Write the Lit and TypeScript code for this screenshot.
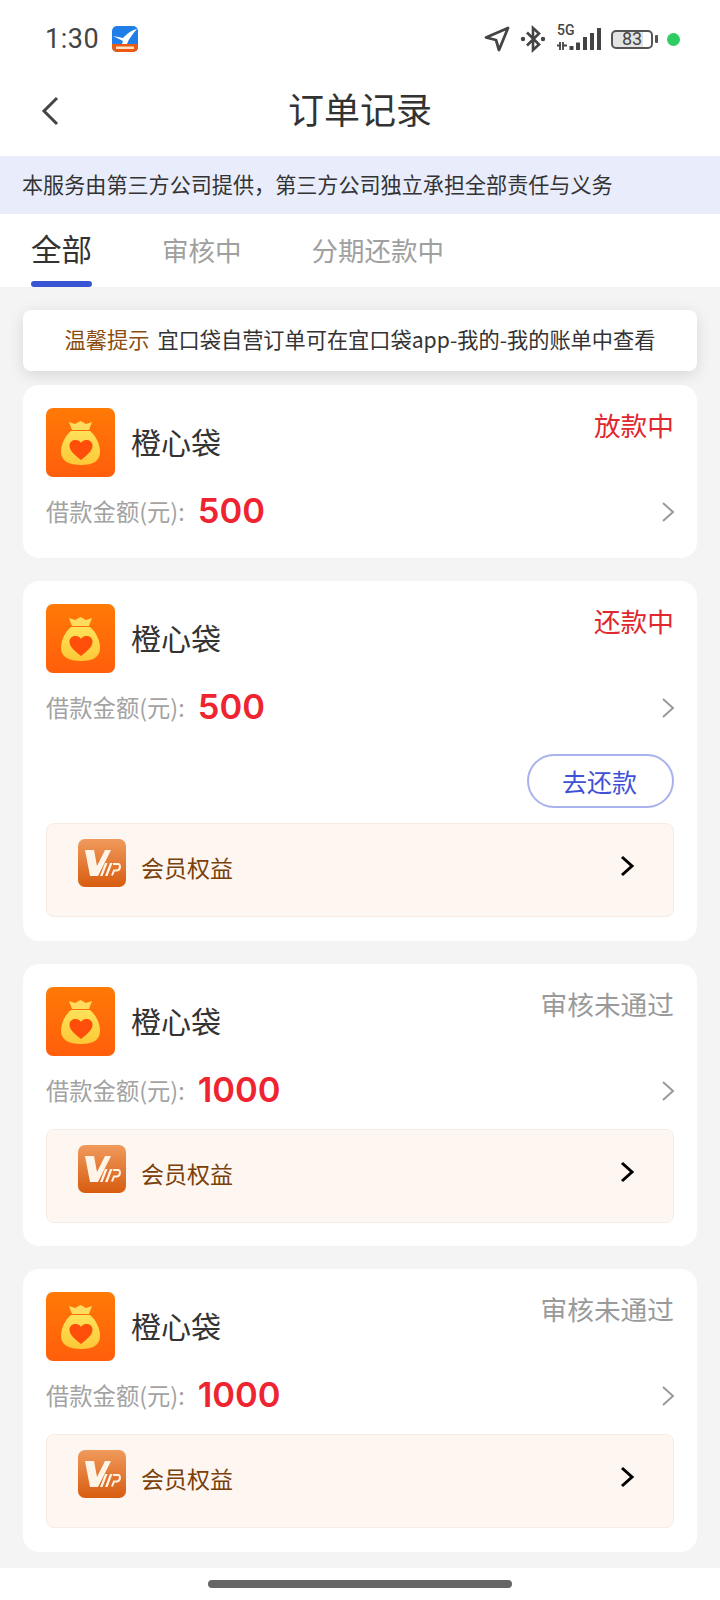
import { LitElement, html, css, nothing } from 'lit';
import { customElement } from 'lit/decorators.js';

interface Order {
  amount: string;
  status: string;
  statusColor: 'red' | 'grey';
  repay?: boolean;
  vip?: boolean;
}

const ORDERS: Order[] = [
  { amount: '500', status: '放款中', statusColor: 'red' },
  { amount: '500', status: '还款中', statusColor: 'red', repay: true, vip: true },
  { amount: '1000', status: '审核未通过', statusColor: 'grey', vip: true },
  { amount: '1000', status: '审核未通过', statusColor: 'grey', vip: true },
];

const bagIcon = html`<svg class="bag" viewBox="0 0 69 69" width="69" height="69">
  <defs>
    <linearGradient id="bagBg" x1="0" y1="0" x2="0" y2="1">
      <stop offset="0" stop-color="#ff7a06" />
      <stop offset="1" stop-color="#ff5e0c" />
    </linearGradient>
    <linearGradient id="bagBody" x1="0" y1="0" x2="0" y2="1">
      <stop offset="0" stop-color="#ffe25a" />
      <stop offset="1" stop-color="#fdc836" />
    </linearGradient>
  </defs>
  <rect width="69" height="69" rx="7" fill="url(#bagBg)" />
  <path d="M23 14 L29 16 L34.500 13 L40 16 L46 14 L43 22 H26 Z" fill="#ffdc5e" />
  <path d="M25 23 H44 C50 28 54 36 54 44 C54 53 47 57 35 57 C23 57 15 53 15 44 C15 36 19 28 25 23 Z" fill="url(#bagBody)" />
  <path d="M35 52 C29 47 23.500 43 23.500 37.500 C23.500 34 26.500 32 29.500 32 C32 32 34 33 35 35 C36 33 38 32 40.500 32 C43.500 32 46.500 34 46.500 37.500 C46.500 43 41 47 35 52 Z" fill="#ff4d0a" />
</svg>`;

const vipIcon = html`<svg class="vip" viewBox="0 0 48 48" width="48" height="48">
  <defs>
    <linearGradient id="vipBg" x1="0" y1="0" x2="0" y2="1">
      <stop offset="0" stop-color="#f09a5c" />
      <stop offset="1" stop-color="#d75c10" />
    </linearGradient>
  </defs>
  <rect width="48" height="48" rx="7" fill="url(#vipBg)" />
  <path d="M7 11 H16 L19 27 L27 11 H33 L20 37 H12 Z" fill="#fff4e8" />
  <path d="M27 24 H29.500 L24.500 37 H22 Z M32 24 H34.500 L29.500 37 H27 Z" fill="#fff4e8" />
  <path d="M35 25 H40 C43 25 42.500 31 39 31.500 H36 L34 36.500" fill="none" stroke="#fff4e8" stroke-width="2" />
</svg>`;

const chevron = (cls: string) => html`<svg class=${cls} viewBox="0 0 16 24" width="16" height="24">
  <path d="M3 3 L13 12 L3 21" fill="none" stroke="currentColor" />
</svg>`;

@customElement('status-bar')
export class StatusBar extends LitElement {
  static styles = css`
    :host {
      display: flex;
      align-items: center;
      height: 78px;
      padding: 0 40px 0 45px;
      color: #444;
      background: #fff;
    }
    .time {
      font: 400 27px/1 Roboto, sans-serif;
      letter-spacing: 0.5px;
    }
    .app {
      margin-left: 13px;
    }
    .right {
      margin-left: auto;
      display: flex;
      align-items: center;
    }
    .bt {
      margin-left: 9px;
    }
    .sig {
      position: relative;
      width: 46px;
      height: 28px;
      margin-left: 10px;
    }
    .fiveg {
      position: absolute;
      left: 1px;
      top: -2px;
      font: 500 14px/14px Roboto, sans-serif;
    }
    .battery {
      margin-left: 9px;
      width: 42px;
      height: 19px;
      box-sizing: border-box;
      border: 2px solid #555;
      border-radius: 5px;
      display: flex;
      align-items: center;
      justify-content: center;
      font: 400 18px/1 Roboto, sans-serif;
      background: linear-gradient(90deg, #e4e4e4 80%, #fff 80%);
    }
    .cap {
      width: 3px;
      height: 8px;
      margin-left: 2px;
      background: #555;
      border-radius: 1px;
    }
    .dot {
      width: 13px;
      height: 13px;
      border-radius: 50%;
      background: #2ecc62;
      margin-left: 9px;
    }
  `;

  render() {
    return html`
      <span class="time">1:30</span>
      <svg class="app" viewBox="0 0 26 26" width="26" height="26">
        <rect width="26" height="26" rx="5" fill="#1f7ee8" />
        <path d="M0 18 H26 V21 a5 5 0 0 1 -5 5 H5 a5 5 0 0 1 -5 -5 Z" fill="#ea5a12" />
        <path d="M1 10 L11 12 C14 9 19 4 25 3 C21 8 17 12 15 18 H10 L11 15 Z" fill="#fff" />
        <rect x="4" y="20.500" width="18" height="2.500" fill="#ffe2c8" />
      </svg>
      <div class="right">
        <svg viewBox="0 0 28 28" width="28" height="28">
          <path d="M25 3 L3 12.500 L13 15 L16 25 Z" fill="none" stroke="#444" stroke-width="2.800" stroke-linejoin="round" />
        </svg>
        <svg class="bt" viewBox="0 0 26 28" width="26" height="28">
          <path d="M7 7.500 L19 19.500 L13 25 V3 L19 8.500 L7 20.500" fill="none" stroke="#444" stroke-width="2.600" />
          <circle cx="3" cy="14" r="2.200" fill="#444" />
          <circle cx="23" cy="14" r="2.200" fill="#444" />
        </svg>
        <div class="sig">
          <span class="fiveg">5G</span>
          <svg viewBox="0 0 46 28" width="46" height="28">
            <path d="M1 20.500 H5 M4 17 V25 M7 17 V25 M7 20.500 H11" stroke="#444" stroke-width="1.800" fill="none" />
            <rect x="13.500" y="21" width="4" height="4" fill="#444" />
            <rect x="20" y="17.500" width="4" height="7.500" fill="#444" />
            <rect x="27" y="12" width="4" height="13" fill="#444" />
            <rect x="34" y="8" width="4" height="17" fill="#444" />
            <rect x="41" y="3" width="4" height="22" fill="#444" />
          </svg>
        </div>
        <div class="battery">83</div>
        <div class="cap"></div>
        <div class="dot"></div>
      </div>
    `;
  }
}

@customElement('order-card')
export class OrderCard extends LitElement {
  static properties = { order: { attribute: false } };
  declare order: Order;

  static styles = css`
    :host {
      display: block;
      background: #fff;
      border-radius: 16px;
      padding: 23px;
    }
    .head {
      display: flex;
      align-items: flex-start;
    }
    .title {
      margin-left: 16px;
      height: 69px;
      line-height: 67px;
      font-size: 30px;
      color: #333;
    }
    .status {
      margin-left: auto;
      font-size: 26.700px;
      line-height: 33px;
    }
    .status.red {
      color: #e0282e;
    }
    .status.grey {
      color: #9a9a9a;
    }
    .amount-row {
      display: flex;
      align-items: center;
      height: 46px;
      margin-top: 11px;
      padding-bottom: 1px;
    }
    .label {
      font-size: 23.300px;
      color: #a3a3a3;
    }
    .amount {
      margin-left: 13px;
      font: 600 34.500px/46px Inter, Roboto, sans-serif;
      color: #ee2530;
    }
    .more {
      margin-left: auto;
      margin-right: -2px;
      margin-top: 2px;
      color: #9a9a9a;
      stroke-width: 2px;
    }
    .repay-row {
      display: flex;
      justify-content: flex-end;
      margin-top: 23px;
    }
    .repay {
      width: 147px;
      height: 54px;
      box-sizing: border-box;
      border: 2px solid #a8b2ee;
      border-radius: 27px;
      padding-right: 2px;
      display: flex;
      align-items: center;
      justify-content: center;
      font-size: 25px;
      color: #3f51d6;
    }
    .vip-box {
      display: flex;
      align-items: flex-start;
      height: 94px;
      box-sizing: border-box;
      margin-top: 15px;
      padding: 15px 38px 0 31px;
      background: #fdf6f1;
      border: 1px solid #f7ece4;
      border-radius: 8px;
    }
    .repay-row + .vip-box {
      margin-bottom: 1px;
    }
    .vip-text {
      margin-left: 15px;
      font-size: 23px;
      line-height: 57px;
      color: #7a3f0a;
    }
    .vip-more {
      margin-left: auto;
      margin-top: 15px;
      color: #000;
      stroke-width: 3px;
    }
  `;

  render() {
    const o = this.order;
    return html`
      <div class="head">
        ${bagIcon}
        <span class="title">橙心袋</span>
        <span class="status ${o.statusColor}">${o.status}</span>
      </div>
      <div class="amount-row">
        <span class="label">借款金额(元):</span>
        <span class="amount">${o.amount}</span>
        ${chevron('more')}
      </div>
      ${o.repay ? html`<div class="repay-row"><div class="repay">去还款</div></div>` : nothing}
      ${o.vip
        ? html`<div class="vip-box">
            ${vipIcon}
            <span class="vip-text">会员权益</span>
            ${chevron('vip-more')}
          </div>`
        : nothing}
    `;
  }
}

@customElement('app-root')
export class AppRoot extends LitElement {
  static styles = css`
    :host {
      display: block;
      width: 720px;
      height: 1600px;
      overflow: hidden;
      background: #fff;
      font-family: 'Noto Sans CJK SC', 'Noto Sans', sans-serif;
      color: #333;
    }
    .nav {
      display: flex;
      align-items: center;
      padding: 0 0 12px 41px;
      height: 78px;
      box-sizing: border-box;
    }
    .back {
      flex: none;
      color: #444;
    }
    .nav h1 {
      flex: 1;
      margin: 0 41px 6px -18px;
      text-align: center;
      font-size: 36px;
      font-weight: 400;
      color: #333;
    }
    .notice {
      height: 58px;
      line-height: 56px;
      padding-left: 22px;
      background: #e9ecfb;
      font-size: 21.100px;
      color: #333;
    }
    .tabs {
      display: flex;
      align-items: flex-start;
      height: 73px;
      padding-left: 31px;
    }
    .tab {
      position: relative;
      font-size: 26.500px;
      line-height: 71px;
      color: #a0a0a0;
      height: 73px;
      margin-right: 70px;
    }
    .tab.active {
      font-size: 30.500px;
      color: #333;
      line-height: 68px;
    }
    .tab.active::after {
      content: '';
      position: absolute;
      left: 0;
      right: 0;
      bottom: 0;
      height: 6px;
      border-radius: 3px;
      background: #3a55d4;
    }
    .list {
      height: 1281px;
      box-sizing: border-box;
      background: #f4f4f4;
      padding: 23px 23px 0;
      display: flex;
      flex-direction: column;
    }
    .hint {
      height: 61px;
      line-height: 57px;
      text-align: center;
      background: #fff;
      border-radius: 8px;
      box-shadow: 0 4px 16px rgba(0, 0, 0, 0.12);
      font-size: 21.200px;
      color: #333;
      margin-bottom: 14px;
    }
    .hint b {
      font-weight: 400;
      color: #8a4d10;
      margin-right: 8px;
    }
    order-card + order-card {
      margin-top: 23px;
    }
    order-card:last-child {
      padding-bottom: 24px;
    }
    .home {
      height: 32px;
      display: flex;
      justify-content: center;
      align-items: center;
    }
    .home i {
      display: block;
      width: 304px;
      height: 8px;
      border-radius: 4px;
      background: #666;
    }
  `;

  render() {
    return html`
      <status-bar></status-bar>
      <div class="nav">
        <svg class="back" viewBox="0 0 18 30" width="18" height="30">
          <path d="M16 2 L3 15 L16 28" fill="none" stroke="currentColor" stroke-width="3" />
        </svg>
        <h1>订单记录</h1>
      </div>
      <div class="notice">本服务由第三方公司提供，第三方公司独立承担全部责任与义务</div>
      <div class="tabs">
        <div class="tab active">全部</div>
        <div class="tab">审核中</div>
        <div class="tab">分期还款中</div>
      </div>
      <div class="list">
        <div class="hint"><b>温馨提示</b>宜口袋自营订单可在宜口袋app-我的-我的账单中查看</div>
        ${ORDERS.map((o) => html`<order-card .order=${o}></order-card>`)}
      </div>
      <div class="home"><i></i></div>
    `;
  }
}
